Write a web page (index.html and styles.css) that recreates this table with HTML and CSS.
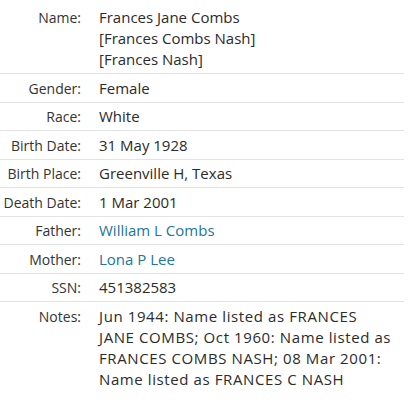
FILE: index.html
```html
<!DOCTYPE html>
<html>
<head>
<meta charset="utf-8">
<link rel="stylesheet" href="styles.css">
</head>
<body>
<table class="facts">
  <tr class="first"><th>Name:</th><td>Frances Jane Combs<br>[Frances Combs Nash]<br>[Frances Nash]</td></tr>
  <tr><th>Gender:</th><td>Female</td></tr>
  <tr><th>Race:</th><td>White</td></tr>
  <tr><th>Birth Date:</th><td>31 May 1928</td></tr>
  <tr><th>Birth Place:</th><td>Greenville H, Texas</td></tr>
  <tr><th>Death Date:</th><td>1 Mar 2001</td></tr>
  <tr><th>Father:</th><td><a class="link" href="#">William L Combs</a></td></tr>
  <tr><th>Mother:</th><td><a class="link" href="#">Lona P Lee</a></td></tr>
  <tr><th>SSN:</th><td>451382583</td></tr>
  <tr class="last"><th>Notes:</th><td class="notes">Jun 1944: Name listed as FRANCES JANE COMBS; Oct 1960: Name listed as FRANCES COMBS NASH; 08 Mar 2001: Name listed as FRANCES C NASH</td></tr>
</table>
</body>
</html>
```
FILE: styles.css
```css
body {
  margin: 0;
  background: #fff;
  font-family: "Open Sans", "Liberation Sans", sans-serif;
  color: #2f2f2f;
}
.facts {
  width: 404px;
  border-collapse: collapse;
}
.facts th, .facts td {
  border-bottom: 1px solid #e3e3e3;
  padding: 3.5px 0 3px;
  vertical-align: top;
  line-height: 21px;
}
.facts tr.first th, .facts tr.first td {
  padding-top: 7px;
}
.facts th {
  width: 81px;
  text-align: right;
  font-weight: normal;
  font-size: 14px;
  padding-right: 18px;
  color: #333;
  white-space: nowrap;
}
.facts td {
  font-size: 15px;
  color: #2b2b2b;
  padding-right: 10px;
}
.facts td.notes {
  letter-spacing: 0.6px;
}
.facts tr.last th, .facts tr.last td {
  border-bottom: none;
}
.link {
  color: #22769a;
  text-decoration: none;
}
```
